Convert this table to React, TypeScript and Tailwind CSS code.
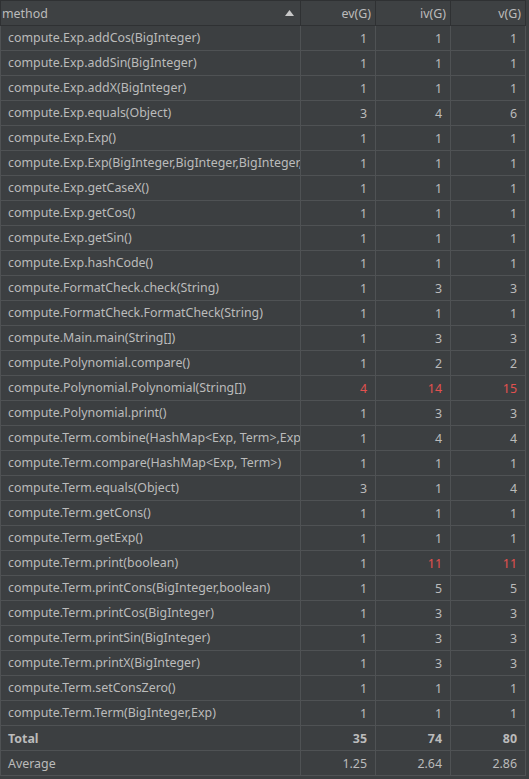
import React from "react";

type Row = { m: string; ev: string; iv: string; v: string; red?: [boolean, boolean, boolean] };

const rows: Row[] = [
  { m: "compute.Exp.addCos(BigInteger)", ev: "1", iv: "1", v: "1" },
  { m: "compute.Exp.addSin(BigInteger)", ev: "1", iv: "1", v: "1" },
  { m: "compute.Exp.addX(BigInteger)", ev: "1", iv: "1", v: "1" },
  { m: "compute.Exp.equals(Object)", ev: "3", iv: "4", v: "6" },
  { m: "compute.Exp.Exp()", ev: "1", iv: "1", v: "1" },
  { m: "compute.Exp.Exp(BigInteger,BigInteger,BigInteger,BigInteger)", ev: "1", iv: "1", v: "1" },
  { m: "compute.Exp.getCaseX()", ev: "1", iv: "1", v: "1" },
  { m: "compute.Exp.getCos()", ev: "1", iv: "1", v: "1" },
  { m: "compute.Exp.getSin()", ev: "1", iv: "1", v: "1" },
  { m: "compute.Exp.hashCode()", ev: "1", iv: "1", v: "1" },
  { m: "compute.FormatCheck.check(String)", ev: "1", iv: "3", v: "3" },
  { m: "compute.FormatCheck.FormatCheck(String)", ev: "1", iv: "1", v: "1" },
  { m: "compute.Main.main(String[])", ev: "1", iv: "3", v: "3" },
  { m: "compute.Polynomial.compare()", ev: "1", iv: "2", v: "2" },
  { m: "compute.Polynomial.Polynomial(String[])", ev: "4", iv: "14", v: "15", red: [true, true, true] },
  { m: "compute.Polynomial.print()", ev: "1", iv: "3", v: "3" },
  { m: "compute.Term.combine(HashMap<Exp, Term>,Exp)", ev: "1", iv: "4", v: "4" },
  { m: "compute.Term.compare(HashMap<Exp, Term>)", ev: "1", iv: "1", v: "1" },
  { m: "compute.Term.equals(Object)", ev: "3", iv: "1", v: "4" },
  { m: "compute.Term.getCons()", ev: "1", iv: "1", v: "1" },
  { m: "compute.Term.getExp()", ev: "1", iv: "1", v: "1" },
  { m: "compute.Term.print(boolean)", ev: "1", iv: "11", v: "11", red: [false, true, true] },
  { m: "compute.Term.printCons(BigInteger,boolean)", ev: "1", iv: "5", v: "5" },
  { m: "compute.Term.printCos(BigInteger)", ev: "1", iv: "3", v: "3" },
  { m: "compute.Term.printSin(BigInteger)", ev: "1", iv: "3", v: "3" },
  { m: "compute.Term.printX(BigInteger)", ev: "1", iv: "3", v: "3" },
  { m: "compute.Term.setConsZero()", ev: "1", iv: "1", v: "1" },
  { m: "compute.Term.Term(BigInteger,Exp)", ev: "1", iv: "1", v: "1" },
];

const font = { fontFamily: '"Noto Sans", "Open Sans", sans-serif' };

function NumCell({ value, red, bold }: { value: string; red?: boolean; bold?: boolean }) {
  return (
    <div
      className={
        "w-[75px] shrink-0 border-r border-[#4f5254] flex items-center justify-end pr-[8px] " +
        (red ? "text-[#e2514f] " : "text-[#bbbbbb] ") +
        (bold ? "font-bold" : "")
      }
    >
      {value}
    </div>
  );
}

export default function App() {
  return (
    <div className="w-[529px] h-[779px] bg-[#3c3f41] overflow-hidden text-[12.4px] leading-[17px]" style={font}>
      <div className="w-[526px]">
        {/* header */}
        <div className="flex h-[26px] border-t border-b border-[#2f3133] bg-[#3e4143] text-[#bbbbbb]">
          <div className="w-[301px] shrink-0 border-l border-r border-[#2f3133] flex items-center justify-between pl-[1px] pr-[6px]">
            <span>method</span>
            <svg width="9" height="6" viewBox="0 0 9 6">
              <polygon points="0,6 9,6 4.5,0" fill="#c8c8c8" />
            </svg>
          </div>
          <div className="w-[75px] shrink-0 border-r border-[#2f3133] flex items-center justify-end pr-[4px]">ev(G)</div>
          <div className="w-[75px] shrink-0 border-r border-[#2f3133] flex items-center justify-end pr-[4px]">iv(G)</div>
          <div className="w-[75px] shrink-0 border-r border-[#2f3133] flex items-center justify-end pr-[4px]">v(G)</div>
        </div>
        {rows.map((r) => (
          <div key={r.m} className="flex h-[25px] border-b border-[#4f5254]">
            <div className="w-[301px] shrink-0 border-l border-r border-[#4f5254] flex items-center pl-[7px] pr-[1px] pb-[1px] text-[#bbbbbb] overflow-hidden whitespace-nowrap">
              {r.m}
            </div>
            <NumCell value={r.ev} red={r.red?.[0]} />
            <NumCell value={r.iv} red={r.red?.[1]} />
            <NumCell value={r.v} red={r.red?.[2]} />
          </div>
        ))}
        <div className="flex h-[25px] border-b border-[#4f5254]">
          <div className="w-[301px] shrink-0 border-l border-r border-[#4f5254] flex items-center pl-[7px] text-[#bbbbbb] font-bold">
            Total
          </div>
          <NumCell value="35" bold />
          <NumCell value="74" bold />
          <NumCell value="80" bold />
        </div>
        <div className="flex h-[25px] border-b border-[#4f5254]">
          <div className="w-[301px] shrink-0 border-l border-r border-[#4f5254] flex items-center pl-[7px] text-[#bbbbbb]">
            Average
          </div>
          <NumCell value="1.25" />
          <NumCell value="2.64" />
          <NumCell value="2.86" />
        </div>
      </div>
    </div>
  );
}
